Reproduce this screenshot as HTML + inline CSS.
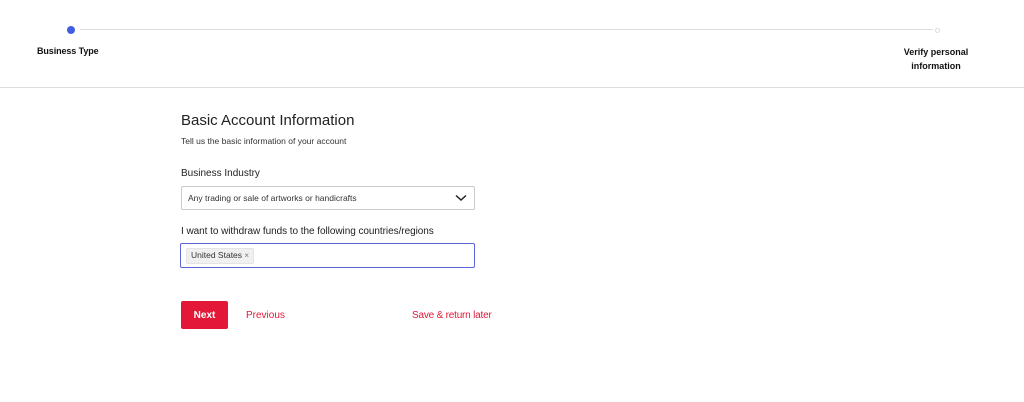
<!DOCTYPE html>
<html><head><meta charset="utf-8"><style>
body{margin:0;width:1024px;height:402px;background:#fff;font-family:"Liberation Sans",sans-serif;color:#222;position:relative;overflow:hidden}
.a{position:absolute}
</style></head><body>
<div class="a" style="left:67px;top:26px;width:8px;height:8px;border-radius:50%;background:#3f5ee0"></div>
<div class="a" style="left:80px;top:29px;width:853px;height:1px;background:#ddd"></div>
<div class="a" style="left:935px;top:28px;width:3px;height:3px;border:1px solid #ddd;border-radius:50%"></div>
<div class="a" style="left:37px;top:46px;font-size:9px;font-weight:bold;color:#111;letter-spacing:-0.1px">Business Type</div>
<div class="a" style="left:890px;top:45px;width:92px;text-align:center;font-size:9px;font-weight:bold;line-height:14px;color:#111">Verify personal information</div>
<div class="a" style="left:0;top:87px;width:1024px;height:1px;background:#ddd"></div>
<div class="a" style="left:181px;top:112px;font-size:15px;color:#222">Basic Account Information</div>
<div class="a" style="left:181px;top:136px;font-size:8.5px;color:#333">Tell us the basic information of your account</div>
<div class="a" style="left:181px;top:168px;font-size:10px;color:#222">Business Industry</div>
<div class="a" style="left:181px;top:186px;width:292px;height:22px;border:1px solid #ccc;border-radius:2px"></div>
<div class="a" style="left:188px;top:193px;font-size:8.5px;color:#333">Any trading or sale of artworks or handicrafts</div>
<svg class="a" style="left:455px;top:194px" width="12" height="8"><path d="M1 1.5 L6 6 L11 1.5" stroke="#222" stroke-width="1.5" fill="none"/></svg>
<div class="a" style="left:181px;top:226px;font-size:10px;color:#222;letter-spacing:-0.05px">I want to withdraw funds to the following countries/regions</div>
<div class="a" style="left:180px;top:243px;width:293px;height:23px;border:1px solid #5a67d8;border-radius:2px"></div>
<div class="a" style="left:186px;top:248px;width:66px;height:14px;background:#f0f0f0;border:1px solid #e4e4e4;border-radius:2px"></div>
<div class="a" style="left:191px;top:250px;font-size:8.5px;color:#333">United States <span style="font-size:8px;color:#777">×</span></div>
<div class="a" style="left:181px;top:301px;width:47px;height:28px;background:#e31838;border-radius:2px;color:#fff;font-size:10px;font-weight:bold;text-align:center;line-height:29px">Next</div>
<div class="a" style="left:246px;top:310px;font-size:10px;color:#e31838">Previous</div>
<div class="a" style="left:412px;top:310px;font-size:10px;color:#e31838;letter-spacing:-0.2px">Save &amp; return later</div>
</body></html>
